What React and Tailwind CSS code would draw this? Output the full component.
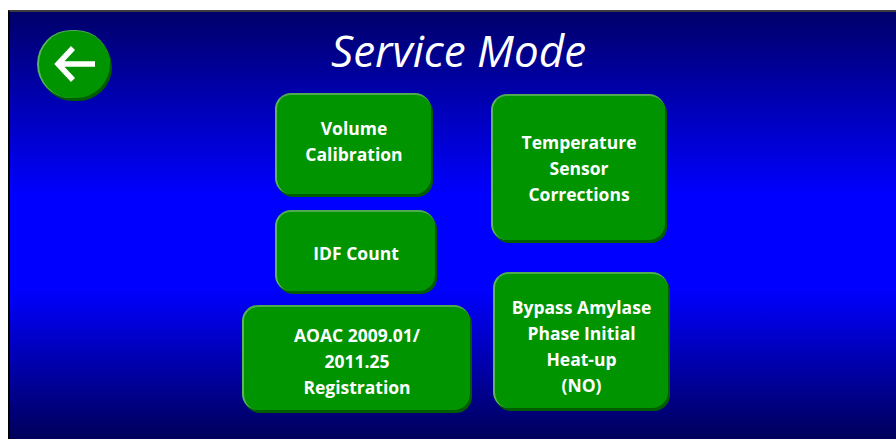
const font = { fontFamily: '"Open Sans", "Noto Sans", sans-serif' };

function GreenButton({ className, children }) {
  return (
    <button
      className={`flex items-center justify-center rounded-[16px] border-l-2 border-t-2 border-l-[#5fb35f] border-t-[#4fa94f] bg-[#009400] text-center text-[17.5px] font-bold leading-[26px] text-white shadow-[2px_3px_0_#005c00] ${className}`}
    >
      {children}
    </button>
  );
}

export default function App() {
  return (
    <div className="h-[439px] w-[896px] overflow-hidden bg-white pl-[8px] pt-[10px]" style={font}>
      <div className="flex h-full border-l-2 border-t-2 border-l-black border-t-[#3c3c3c] bg-[linear-gradient(180deg,#00006a_0%,#0000ff_43%,#0000ff_65%,#00005a_100%)]">
        {/* back */}
        <div className="w-[102px] shrink-0 pl-[27px] pt-[18px]">
          <button className="flex h-[68px] w-[73px] items-center justify-center rounded-full border-l-2 border-t border-l-[#5fb35f] border-t-[#4fa94f] bg-[#009400] shadow-[2px_3px_0_#005c00]">
            <svg width="44" height="40" viewBox="0 0 44 40" className="ml-[2px]">
              <path d="M19 3 L4 19 L19 35 M4 19 H41" fill="none" stroke="white" strokeWidth="5.5" strokeLinejoin="miter" />
            </svg>
          </button>
        </div>

        <div className="flex flex-col">
          <h1 className="ml-[219px] h-[81px] pt-[12px] text-[44px] italic leading-[52px] text-white">
            Service Mode
          </h1>

          <div className="flex">
            {/* left column */}
            <div className="flex w-[231px] flex-col ml-[130px]">
              <GreenButton className="ml-[33px] h-[101px] w-[156px] pb-[8px]">
                Volume
                <br />
                Calibration
              </GreenButton>
              <GreenButton className="ml-[33px] mt-[16px] h-[81px] w-[160px] pt-[2px]">
                IDF Count
              </GreenButton>
              <GreenButton className="mt-[14px] h-[105px] w-[228px] pt-[4px]">
                AOAC 2009.01/
                <br />
                2011.25
                <br />
                Registration
              </GreenButton>
            </div>

            {/* right column */}
            <div className="ml-[18px] flex flex-col">
              <GreenButton className="mt-[1px] h-[146px] w-[174px]">
                Temperature
                <br />
                Sensor
                <br />
                Corrections
              </GreenButton>
              <GreenButton className="ml-[2px] mt-[32px] h-[136px] w-[175px] pt-[9px]">
                Bypass Amylase
                <br />
                Phase Initial
                <br />
                Heat-up
                <br />
                (NO)
              </GreenButton>
            </div>
          </div>
        </div>
      </div>
    </div>
  );
}
